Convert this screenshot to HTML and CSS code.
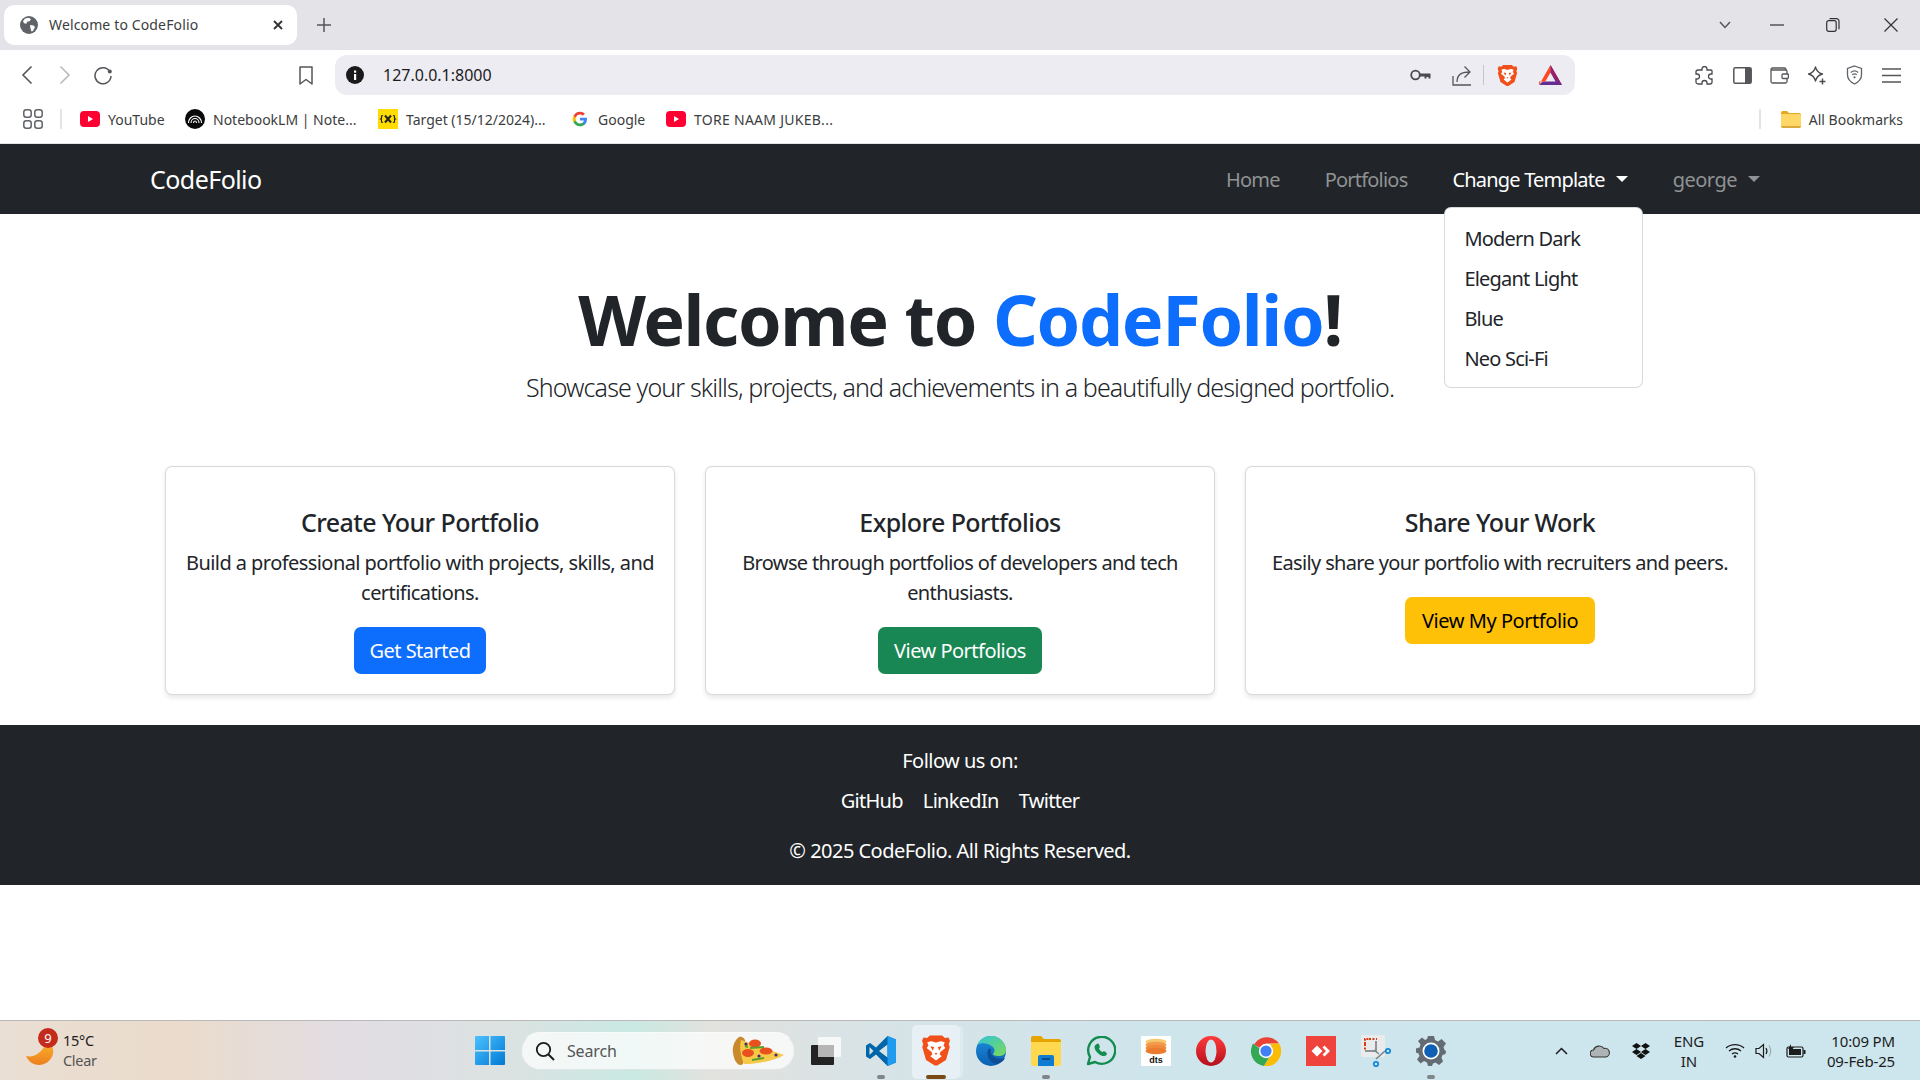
FILE: index.html
```html
<!DOCTYPE html>
<html lang="en">
<head>
<meta charset="utf-8">
<title>Welcome to CodeFolio</title>
<link rel="stylesheet" href="styles.css">
</head>
<body>
<svg class="defs" width="0" height="0" aria-hidden="true">
  <symbol id="brave" viewBox="0 0 24 26">
    <path fill="#f1501a" d="M7 1h10l2 2 3-.5 1.2 2.7-1 2.8.8 2.2-3 10.300L13 25h-2l-7-4.500L1 10.200 1.800 8l-1-2.800L2 2.500 5 3z"/>
    <path fill="#fff" d="M12 6.500c-1.800 0-3-1.200-4.600-.8L5 6.300 6 9l-1.500 2 4 3.200.6 1.800-1.600 1.500L12 21l4.500-3.500-1.600-1.500.6-1.800 4-3.200L18 9l1-2.700-2.400-.6C15 5.300 13.800 6.500 12 6.500z"/>
    <path fill="#f1501a" d="M7.500 9.500l3 .7-1 3zM16.500 9.500l-3 .7 1 3zM10.800 15h2.400L12 16.500z"/>
  </symbol>
  <symbol id="yt" viewBox="0 0 20 16">
    <rect width="20" height="16" rx="4" fill="#ff0033"/>
    <path fill="#fff" d="M8 5l5 3-5 3z"/>
  </symbol>
</svg>
<div class="screen">
  <header class="browser">
    <div class="tabstrip">
      <div class="tab">
        <svg class="tab-globe" width="18" height="18" viewBox="0 0 18 18"><circle cx="9" cy="9" r="9" fill="#5f6368"/><path fill="#fff" d="M5 2.500l4-.8 2 1.500-1.500 2-2.500.5-.5 2-2.500-.5-1-2zM10 9l3.500.5 1.500 1.500-2 4-1.500.5-1-3z"/></svg>
        <span class="tab-title">Welcome to CodeFolio</span>
        <svg class="tab-close" width="10" height="10" viewBox="0 0 10 10"><path d="M1 1l8 8M9 1l-8 8" stroke="#2f3134" stroke-width="1.800" fill="none"/></svg>
      </div>
      <svg class="tab-new" width="14" height="14" viewBox="0 0 14 14"><path d="M7 0v14M0 7h14" stroke="#55565a" stroke-width="1.500" fill="none"/></svg>
      <div class="win-ctrls">
        <svg class="win-chev" width="12" height="8" viewBox="0 0 12 8"><path d="M1 1l5 5.500L11 1" stroke="#55565a" stroke-width="1.500" fill="none"/></svg>
        <svg class="win-min" width="14" height="2" viewBox="0 0 14 2"><path d="M0 1h14" stroke="#333" stroke-width="1.200"/></svg>
        <svg class="win-max" width="14" height="14" viewBox="0 0 14 14"><rect x=".7" y="2.700" width="9.500" height="10.600" rx="2" fill="none" stroke="#333" stroke-width="1.200"/><path d="M3.500.7h7a2.500 2.500 0 0 1 2.500 2.500v8" fill="none" stroke="#333" stroke-width="1.200"/></svg>
        <svg class="win-close" width="14" height="14" viewBox="0 0 14 14"><path d="M.5.5l13 13M13.500.5l-13 13" stroke="#333" stroke-width="1.200" fill="none"/></svg>
      </div>
    </div>
    <div class="toolbar">
      <span class="tb-btn"><svg width="12" height="20" viewBox="0 0 12 20"><path d="M10.500 1.500L2 10l8.500 8.500" stroke="#55565a" stroke-width="1.600" fill="none"/></svg></span>
      <span class="tb-btn"><svg width="12" height="20" viewBox="0 0 12 20"><path d="M1.500 1.500L10 10l-8.500 8.500" stroke="#b9b9be" stroke-width="1.600" fill="none"/></svg></span>
      <span class="tb-btn"><svg width="20" height="20" viewBox="0 0 20 20"><path d="M16.800 6.500A8 8 0 1 0 18 11" stroke="#55565a" stroke-width="1.500" fill="none"/><circle cx="16.800" cy="6.500" r="2" fill="#55565a"/></svg></span>
      <span class="tb-btn tb-bookmark"><svg width="14" height="19" viewBox="0 0 14 19"><path d="M1 1h12v17l-6-4.500L1 18z" stroke="#55565a" stroke-width="1.500" fill="none" stroke-linejoin="round"/></svg></span>
      <div class="address">
        <svg class="addr-info" width="18" height="18" viewBox="0 0 18 18"><circle cx="9" cy="9" r="9" fill="#1a1a1c"/><rect x="8" y="8" width="2.200" height="6" fill="#fff"/><rect x="8" y="4.500" width="2.200" height="2.200" fill="#fff"/></svg>
        <span class="addr-url">127.0.0.1:8000</span>
        <div class="addr-icons">
          <span class="ai ai-key"><svg width="21" height="12" viewBox="0 0 21 12"><circle cx="5.500" cy="6" r="4.300" fill="none" stroke="#4a4b4f" stroke-width="1.800"/><path d="M10 4.500h10.500V9.500h-2V8h-2v1.500h-2V7.500H10z" fill="#4a4b4f"/></svg></span>
          <span class="ai ai-share"><svg width="20" height="21" viewBox="0 0 20 21"><path d="M1 11v9h18" stroke="#55565a" stroke-width="1.300" fill="none"/><path d="M5 17c0-7 4-10 12-10M12.500 1.500l5.500 5.500-5.500 5.500" stroke="#55565a" stroke-width="1.300" fill="none"/></svg></span>
          <span class="ai-div"></span>
          <span class="ai ai-brave"><svg width="21" height="23"><use href="#brave"/></svg></span>
          <span class="ai ai-bat"><svg width="23" height="20" viewBox="0 0 23 20"><path fill="#662d91" d="M11.500 0L23 20H0l3.500-3.500h13L11.500 7.500z"/><path fill="#ff4724" d="M11.500 0v7.500l-5.200 9H0v3.500z"/><path fill="#9e1f63" d="M11.500 0L23 20l-4-3.500-7.500-9z"/></svg></span>
        </div>
      </div>
      <div class="ext-icons">
        <span class="ext"><svg width="19" height="19" viewBox="0 0 19 19"><path d="M7 3a2.500 2.500 0 0 1 5 0v1h4a1 1 0 0 1 1 1v3h-1a2.500 2.500 0 0 0 0 5h1v3a2 2 0 0 1-2 2h-3v-1a2.500 2.500 0 0 0-5 0v1H3a2 2 0 0 1-2-2v-3h1a2.500 2.500 0 0 0 0-5H1V6a2 2 0 0 1 2-2h4z" fill="none" stroke="#4a4b4f" stroke-width="1.300"/></svg></span>
        <span class="ext"><svg width="19" height="17" viewBox="0 0 19 17"><rect x=".8" y=".8" width="17.400" height="15.400" rx="1.500" fill="none" stroke="#55565a" stroke-width="1.500"/><rect x="12" y="1" width="6" height="15" fill="#55565a"/></svg></span>
        <span class="ext"><svg width="19" height="17" viewBox="0 0 19 17"><path d="M16 3V2.500A1.500 1.500 0 0 0 14.500 1h-12A1.500 1.500 0 0 0 1 2.500v12A1.500 1.500 0 0 0 2.500 16h13a1.500 1.500 0 0 0 1.500-1.500v-10A1.500 1.500 0 0 0 15.500 3H1" fill="none" stroke="#55565a" stroke-width="1.300"/><rect x="12" y="7" width="6.400" height="4.500" rx="1" fill="#fff" stroke="#55565a" stroke-width="1.300"/></svg></span>
        <span class="ext"><svg width="19" height="19" viewBox="0 0 19 19"><path d="M8.500 1c1 4 3 6 7 7-4 1-6 3-7 7-1-4-3-6-7-7 4-1 6-3 7-7z" fill="none" stroke="#4a4b4f" stroke-width="1.300" stroke-linejoin="round"/><path d="M15.500 12.500v6M12.500 15.500h6" stroke="#4a4b4f" stroke-width="1.400"/></svg></span>
        <span class="ext"><svg width="17" height="20" viewBox="0 0 17 20"><path d="M8.500 1l7 2.500V10c0 4-3 7-7 9-4-2-7-5-7-9V3.500z" fill="none" stroke="#5f6368" stroke-width="1.300"/><path d="M4.800 7.500c2.200-1.800 5.200-1.800 7.400 0M6.200 9.800c1.400-1 3.200-1 4.600 0" fill="none" stroke="#5f6368" stroke-width="1.200"/><circle cx="8.500" cy="12.300" r="1.100" fill="#5f6368"/></svg></span>
        <span class="ext"><svg width="19" height="15" viewBox="0 0 19 15"><path d="M0 1h19M0 7.500h19M0 14h19" stroke="#55565a" stroke-width="1.400"/></svg></span>
      </div>
    </div>
    <div class="bookmarks">
      <svg class="bm-apps" width="20" height="20" viewBox="0 0 20 20"><g fill="none" stroke="#5f6368" stroke-width="1.500"><rect x=".8" y=".8" width="7.400" height="7.400" rx="2.500"/><rect x="11.800" y=".8" width="7.400" height="7.400" rx="2.500"/><rect x=".8" y="11.800" width="7.400" height="7.400" rx="2.500"/><rect x="11.800" y="11.800" width="7.400" height="7.400" rx="2.500"/></g></svg>
      <span class="bm-divider"></span>
      <a class="bm bm-w1"><svg width="20" height="16"><use href="#yt"/></svg>YouTube</a>
      <a class="bm bm-w2"><svg width="20" height="20" viewBox="0 0 20 20"><circle cx="10" cy="10" r="10" fill="#0a0a0a"/><path d="M3.500 14c0-4 3-7 6.500-7s6.500 3 6.500 7M6 14c0-2.500 1.800-4.500 4-4.500s4 2 4 4.500M8.500 14c0-1 .7-2 1.500-2s1.500 1 1.500 2" stroke="#fff" stroke-width="1.100" fill="none"/></svg>NotebookLM | Note...</a>
      <a class="bm bm-w3"><svg width="20" height="20" viewBox="0 0 20 20"><rect width="20" height="20" fill="#ffdd00"/><path d="M5 6.500L3.500 7v2.500L2.500 10l1 .5V13l1.500.5M15 6.500l1.500.5v2.500l1 .5-1 .5V13l-1.500.5" stroke="#222" stroke-width="1.100" fill="none"/><path d="M7 6.500l6 7M13 6.500l-6 7" stroke="#222" stroke-width="2"/></svg>Target (15/12/2024)...</a>
      <a class="bm bm-w4"><svg width="16" height="16" viewBox="0 0 48 48"><path fill="#4285f4" d="M45 24.500c0-1.600-.1-3.100-.4-4.500H24v8.500h11.800c-.5 2.800-2.100 5.100-4.400 6.700v5.500h7.100c4.200-3.800 6.500-9.500 6.500-16.200z"/><path fill="#34a853" d="M24 46c5.900 0 10.900-2 14.500-5.300l-7.100-5.500c-2 1.300-4.500 2.100-7.400 2.100-5.700 0-10.500-3.800-12.200-9H4.500v5.700C8.100 41.100 15.500 46 24 46z"/><path fill="#fbbc05" d="M11.800 28.300c-.4-1.300-.7-2.800-.7-4.300s.3-3 .7-4.300V14H4.500C3 17 2 20.400 2 24s1 7 2.500 10z"/><path fill="#ea4335" d="M24 10.700c3.200 0 6.100 1.100 8.400 3.300l6.300-6.300C34.900 4.200 29.900 2 24 2 15.500 2 8.100 6.900 4.500 14l7.300 5.700c1.700-5.200 6.500-9 12.200-9z"/></svg>Google</a>
      <a class="bm bm-w5"><svg width="20" height="16"><use href="#yt"/></svg>TORE NAAM JUKEB...</a>
      <span class="bm-divider bm-divider-end"></span>
      <a class="bm bm-all"><svg width="20" height="17" viewBox="0 0 20 17"><path fill="#e3a821" d="M0 2a2 2 0 0 1 2-2h4l2 2h10a2 2 0 0 1 2 2v4H0z"/><path fill="#ffd767" d="M0 3h18a2 2 0 0 1 2 2v10a2 2 0 0 1-2 2H2a2 2 0 0 1-2-2z"/><path fill="#d9a93c" d="M0 15h20a2 2 0 0 1-2 2H2a2 2 0 0 1-2-2z"/></svg>All Bookmarks</a>
    </div>
  </header>

  <div class="site">
    <nav class="navbar">
      <a class="brand">CodeFolio</a>
      <ul class="menu">
        <li class="menu-item"><a class="menu-link">Home</a></li>
        <li class="menu-item"><a class="menu-link">Portfolios</a></li>
        <li class="menu-item">
          <a class="menu-link menu-link-active menu-caret">Change Template</a>
          <ul class="dropdown">
            <li class="dropdown-item">Modern Dark</li>
            <li class="dropdown-item">Elegant Light</li>
            <li class="dropdown-item">Blue</li>
            <li class="dropdown-item">Neo Sci-Fi</li>
          </ul>
        </li>
        <li class="menu-item"><a class="menu-link menu-link-user menu-caret">george</a></li>
      </ul>
    </nav>
    <main class="main">
      <section class="hero">
        <h1 class="hero-title">Welcome to <span class="hero-accent">CodeFolio</span>!</h1>
        <p class="hero-lead">Showcase your skills, projects, and achievements in a beautifully designed portfolio.</p>
      </section>
      <section class="cards">
        <article class="card">
          <h5 class="card-title">Create Your Portfolio</h5>
          <p class="card-text">Build a professional portfolio with projects, skills, and certifications.</p>
          <a class="btn btn-primary">Get Started</a>
        </article>
        <article class="card">
          <h5 class="card-title">Explore Portfolios</h5>
          <p class="card-text card-text-tight">Browse through portfolios of developers and tech enthusiasts.</p>
          <a class="btn btn-success">View Portfolios</a>
        </article>
        <article class="card">
          <h5 class="card-title">Share Your Work</h5>
          <p class="card-text card-text-tight">Easily share your portfolio with recruiters and peers.</p>
          <a class="btn btn-warning">View My Portfolio</a>
        </article>
      </section>
    </main>
    <footer class="site-footer">
      <p class="follow">Follow us on:</p>
      <div class="social"><a>GitHub</a><a>LinkedIn</a><a>Twitter</a></div>
      <p class="copyright">© 2025 CodeFolio. All Rights Reserved.</p>
    </footer>
  </div>

  <footer class="taskbar">
    <div class="weather">
      <div class="weather-icon">
        <svg width="28" height="28" viewBox="0 0 28 28"><defs><linearGradient id="moon" x1="0" y1="0" x2="0" y2="1"><stop offset="0" stop-color="#f8b62a"/><stop offset="1" stop-color="#ee7f1e"/></linearGradient></defs><path fill="url(#moon)" d="M0 19c7 2 16-2 21-15 5 2 7 8 6 13-2 7-8 11-14 11-6 0-11-4-13-9z"/></svg>
        <span class="weather-badge">9</span>
      </div>
      <div class="weather-text"><span class="temp">15°C</span><span class="cond">Clear</span></div>
    </div>
    <div class="task-center">
      <svg class="start" width="30" height="29" viewBox="0 0 30 29"><defs><linearGradient id="win" x1="0" y1="0" x2="1" y2="1"><stop offset="0" stop-color="#4cc2ff"/><stop offset="1" stop-color="#0078d4"/></linearGradient></defs><path fill="url(#win)" d="M0 1a1 1 0 0 1 1-1h13v14H0zM15.500 0H29a1 1 0 0 1 1 1v13H15.500zM0 15.500h14V29H1a1 1 0 0 1-1-1zM15.500 15.500H30V28a1 1 0 0 1-1 1H15.500z"/></svg>
      <div class="search">
        <svg class="search-icon" width="20" height="20" viewBox="0 0 20 20"><circle cx="8.500" cy="8.500" r="6.700" fill="none" stroke="#1c1c1c" stroke-width="1.800"/><path d="M13.500 13.500L19 19" stroke="#1c1c1c" stroke-width="2"/></svg>
        <span class="search-text">Search</span>
        <svg class="pizza" width="52" height="30" viewBox="0 0 52 30"><path fill="#c98a2b" d="M7 1c-4 3-7 9-6 16 1 6 3 11 7 12 3 0 4-2 3-5-1-6 0-13 2-18 1-3-3-6-6-5z"/><path fill="#f7c948" d="M9 4l43 15c-8 5-25 9-40 9-3-7-5-16-3-24z"/><ellipse cx="23" cy="7.500" rx="6" ry="4" fill="#e8501e"/><ellipse cx="16" cy="17" rx="6" ry="4" fill="#e8501e"/><ellipse cx="34" cy="15" rx="6.500" ry="3.500" fill="#e8501e"/><path d="M18 12l14-1M20 24l12-2M13 10l3 1" stroke="#5aa02c" stroke-width="2"/><circle cx="14" cy="8" r="1.600" fill="#4b2a72"/><circle cx="27" cy="20" r="1.600" fill="#4b2a72"/><circle cx="44" cy="19" r="1.600" fill="#4b2a72"/></svg>
      </div>
      <div class="task-apps">
        <span class="app"><svg width="30" height="28" viewBox="0 0 30 28"><rect y="8" width="23" height="20" rx="1" fill="#232323"/><rect x="7" width="23" height="20" rx="1" fill="#fff" fill-opacity=".75"/><rect x="7" y="8" width="16" height="12" fill="#b5b5b5"/></svg></span>
        <span class="app app-running"><svg width="30" height="30" viewBox="0 0 30 30"><path fill="#0065a9" d="M21.500 0L10 11.500 4 7 0 9.500v11L4 23l6-4.500L21.500 30l8.500-3.500v-23zM21.500 8.500v13L13 15zM3.500 11l4 4-4 4z"/><path fill="#1f9cf0" d="M21.500 0L30 3.500v23L21.500 30z"/></svg></span>
        <span class="app app-active"><svg width="30" height="33"><use href="#brave"/></svg></span>
        <span class="app"><svg width="30" height="30" viewBox="0 0 30 30"><defs><linearGradient id="edgeA" x1="0" y1="0" x2="1" y2="1"><stop offset="0" stop-color="#2fc6d8"/><stop offset="1" stop-color="#7ed957"/></linearGradient><linearGradient id="edgeB" x1="0" y1="0" x2="0" y2="1"><stop offset="0" stop-color="#1f8fe0"/><stop offset="1" stop-color="#0b5fb0"/></linearGradient></defs><circle cx="15" cy="15" r="15" fill="url(#edgeB)"/><path fill="url(#edgeA)" d="M1 9C4 3 9 0 15 0c9 0 15 7 15 14 0 5-4 6-8 6-3 0-5-1-5-2 2-2 2-5 0-7-4-4-12-5-16-2z"/><path fill="#0c4f96" d="M12 14c-2 5 1 12 8 14 6-1 8-4 9-6-3 1-8 1-11-1-3-2-4-5-3-7 0-1-2-2-3 0z"/></svg></span>
        <span class="app app-running"><svg width="30" height="30" viewBox="0 0 30 30"><path fill="#e6a400" d="M0 2a2 2 0 0 1 2-2h8l3 3h15a2 2 0 0 1 2 2v5H0z"/><path fill="#ffd84f" d="M0 6h30v22a2 2 0 0 1-2 2H2a2 2 0 0 1-2-2z"/><path fill="#0f7cd4" d="M7 21a2 2 0 0 1 2-2h12a2 2 0 0 1 2 2v9H7z"/><path d="M11 23h8" stroke="#053e73" stroke-width="1.500"/></svg></span>
        <span class="app"><svg width="30" height="30" viewBox="0 0 30 30"><path d="M2 28l2-7A13.500 13.500 0 1 1 9 26z" fill="none" stroke="#128c4f" stroke-width="2.400" stroke-linejoin="round"/><path fill="#128c4f" d="M11 8c1-1 2 0 2.500 1.500s.5 2-.5 3c.5 1.500 2 3 3.500 3.500 1-1 1.800-1 3 0s2 2 1 3c-1.500 1.500-4 1.500-7-.5s-5-5-5-7.500c0-1 1-2.500 2.500-3z"/></svg></span>
        <span class="app"><svg width="30" height="30" viewBox="0 0 30 30"><rect width="30" height="30" rx="1" fill="#fff"/><ellipse cx="15" cy="6" rx="10.500" ry="3.200" fill="#f7c76b"/><ellipse cx="15" cy="9" rx="10.500" ry="3.200" fill="#f29b4c"/><ellipse cx="15" cy="12" rx="10.500" ry="3.200" fill="#f08a3c"/><ellipse cx="15" cy="15" rx="10.500" ry="3.200" fill="#ec7a2e"/><text x="15" y="27" text-anchor="middle" class="dts">dts</text></svg></span>
        <span class="app"><svg width="30" height="30" viewBox="0 0 30 30"><defs><linearGradient id="opera" x1="0" y1="0" x2="0" y2="1"><stop offset="0" stop-color="#ff3b3b"/><stop offset="1" stop-color="#b50f1d"/></linearGradient></defs><circle cx="15" cy="15" r="15" fill="url(#opera)"/><ellipse cx="15" cy="15" rx="5.500" ry="11.500" fill="#cfe4ec"/></svg></span>
        <span class="app"><svg width="30" height="30" viewBox="0 0 30 30"><path fill="#ea4335" d="M15 15L3 8.500A15 15 0 0 1 28 7.500H15z"/><path fill="#34a853" d="M2 7.500A15 15 0 0 0 13 30l6-10z"/><path fill="#fbbc05" d="M28 7.500A15 15 0 0 1 13 30l7-11 0-11.500z"/><circle cx="15" cy="15" r="7.200" fill="#fff"/><circle cx="15" cy="15" r="5.600" fill="#3f80f4"/></svg></span>
        <span class="app"><svg width="30" height="30" viewBox="0 0 30 30"><rect width="30" height="30" fill="#ef443b"/><path fill="#fff" d="M11 9.500l5.500 5.500-5.500 5.500L5.500 15zM18.500 9.500L24 15l-5.500 5.500-2-2L20 15l-3.500-3.500z"/></svg></span>
        <span class="app"><svg width="30" height="32" viewBox="0 0 30 32"><rect width="24" height="22" rx="2" fill="#e9ebec"/><path d="M4 9V4h5" stroke="#d83b14" stroke-width="2" stroke-dasharray="2 1.200" fill="none"/><path d="M8 4h8M4 9v7" stroke="#d83b14" stroke-width="2" stroke-dasharray="2 1.500" fill="none"/><path d="M4 16h11V6" stroke="#8e9498" stroke-width="2" fill="none"/><path d="M13 15l5 4M24 16l-9 8" stroke="#7c8286" stroke-width="1.600"/><circle cx="27" cy="16" r="2.200" fill="none" stroke="#1487d8" stroke-width="1.800"/><circle cx="15" cy="29" r="2.200" fill="none" stroke="#1487d8" stroke-width="1.800"/></svg></span>
        <span class="app app-running"><svg width="30" height="30" viewBox="0 0 30 30"><path fill="#636b73" d="M12 0h6l1 4 3 1.400L25.600 3 30 7.400 27.500 11l1 3L30 15v0l-.5 3-3 1-1 2.500L27 25.600 23 29l-3.500-2.500-2.500 1L16 30h-4l-1-3.500L8 25l-3.400 2.500L1 23.500 3.500 20l-1-2.500L0 16.500v-4l3.500-1 1-3L2 5l4-3.500L9 4l2-1z"/><circle cx="15" cy="15" r="8.500" fill="#fff"/><circle cx="15" cy="15" r="6.800" fill="#0f5fb5"/></svg></span>
      </div>
    </div>
    <div class="tray">
      <svg class="tray-chev" width="13" height="8" viewBox="0 0 13 8"><path d="M1 7l5.500-5.500L12 7" stroke="#1c1c1c" stroke-width="1.500" fill="none"/></svg>
      <svg class="tray-cloud" width="20" height="14" viewBox="0 0 20 14"><path d="M4 13a3.500 3.500 0 0 1-.5-7A6 6 0 0 1 14 4.500a4.300 4.300 0 0 1 2 8.500z" fill="#aeb3b6" stroke="#333" stroke-width="1.100"/></svg>
      <svg class="tray-drop" width="18" height="16" viewBox="0 0 18 16"><path fill="#111" d="M4.500 0L9 3 4.500 6 0 3zM13.500 0L18 3l-4.500 3L9 3zM4.500 6L9 9l-4.500 3L0 9zM13.500 6L18 9l-4.500 3L9 9zM9 10l4.500 3L9 16l-4.500-3z"/></svg>
      <div class="tray-lang"><span>ENG</span><span>IN</span></div>
      <svg class="tray-wifi" width="20" height="15" viewBox="0 0 20 15"><path d="M1 5c5-4.500 13-4.500 18 0M4 8c3.500-3 8.500-3 12 0M7 11c2-1.500 4-1.500 6 0" fill="none" stroke="#1c1c1c" stroke-width="1.300"/><circle cx="10" cy="13.500" r="1.300" fill="#1c1c1c"/></svg>
      <svg class="tray-vol" width="18" height="16" viewBox="0 0 18 16"><path d="M1 5.500h3L8.500 1.500v13L4 10.500H1z" fill="none" stroke="#1c1c1c" stroke-width="1.200"/><path d="M11 5c1.200 2 1.200 4 0 6" stroke="#1c1c1c" stroke-width="1.200" fill="none"/><path d="M14 2.500c2.200 3.500 2.200 7.500 0 11" stroke="#9aa" stroke-width="1.100" fill="none"/></svg>
      <svg class="tray-bat" width="20" height="14" viewBox="0 0 20 14"><rect x="1" y="3" width="16" height="10" rx="1.500" fill="none" stroke="#1c1c1c" stroke-width="1.200"/><rect x="3" y="5" width="12" height="6" fill="#1c1c1c"/><rect x="17.500" y="6" width="2" height="4" fill="#1c1c1c"/><path d="M5 0L2 5h3l-1 4 4-6H5z" fill="#1c1c1c"/></svg>
      <div class="tray-clock"><span>10:09 PM</span><span>09-Feb-25</span></div>
    </div>
  </footer>
</div>
</body>
</html>
```

FILE: styles.css
```css
* { box-sizing: border-box; }
html, body { margin: 0; padding: 0; height: 100%; }
body {
  font-family: "Noto Sans", "Open Sans", sans-serif;
  color: #212529;
  background: #fff;
  overflow: hidden;
}
a { color: inherit; text-decoration: none; }
ul { list-style: none; margin: 0; padding: 0; }
svg { display: block; flex: none; }
.defs { position: absolute; }
.screen { height: 100vh; display: flex; flex-direction: column; }

/* browser chrome */
.browser { flex: none; background: #fff; }
.tabstrip { height: 50px; background: #e3e3e8; display: flex; align-items: center; padding-left: 4px; }
.tab {
  width: 293px; height: 40px; background: #fff; border-radius: 10px;
  display: flex; align-items: center; padding: 0 14px 0 16px;
}
.tab-title { margin: 0 0 2px 11px; font-size: 14px; letter-spacing: 0.01em; color: #3c3d40; }
.tab-close { margin-left: auto; }
.tab-new { margin-left: 20px; }
.win-ctrls { margin-left: auto; display: flex; align-items: center; padding-right: 22px; }
.win-min { margin-left: 39px; }
.win-max { margin-left: 42px; }
.win-close { margin-left: 44px; }

.toolbar { height: 50px; display: flex; align-items: center; padding-left: 8px; }
.tb-btn { width: 38px; height: 38px; display: flex; align-items: center; justify-content: center; }
.tb-bookmark { margin-left: 165px; margin-right: 10px; }
.address {
  width: 1240px; height: 40px; background: #edecf2; border-radius: 12px;
  display: flex; align-items: center; padding: 0 5px 0 11px;
}
.addr-url { margin-left: 19px; font-size: 16px; color: #1c1c1e; }
.addr-icons { margin-left: auto; display: flex; align-items: center; }
.ai { display: flex; align-items: center; justify-content: center; }
.ai-key, .ai-share { width: 42px; }
.ai-div { width: 1px; height: 20px; background: #c5c5ca; }
.ai-brave { width: 46px; }
.ai-bat { width: 40px; }
.ext-icons { display: flex; margin-left: 111px; }
.ext { width: 37.4px; display: flex; align-items: center; justify-content: center; }

.bookmarks {
  height: 44px; border-bottom: 1px solid #e3e3e6; display: flex; align-items: center;
  padding: 0 17px 5px 23px; font-size: 14px; color: #3c3d40;
}
.bm-divider { width: 2px; height: 20px; background: #e3e3e8; margin-left: 17px; margin-right: 18px; }
.bm-divider-end { margin-left: auto; margin-right: 20px; }
.bm { display: flex; align-items: center; gap: 8px; white-space: nowrap; }
.bm-w1 { width: 105px; }
.bm-w2 { width: 193px; }
.bm-w3 { width: 194px; }
.bm-w4 { width: 94px; gap: 10px; }
.bm-w5 { width: 180px; letter-spacing: 0.02em; }

/* site */
.site { flex: 1; min-height: 0; display: flex; flex-direction: column; }
.navbar {
  height: 70px; background: #212529; display: flex; align-items: center;
  padding: 0 150px; flex: none;
}
.brand { color: #fff; font-size: 25px; letter-spacing: -0.022em; }
.menu { margin-left: auto; display: flex; align-items: center; gap: 25px; }
.menu-item { position: relative; padding: 0 10px; }
.menu-link { display: flex; align-items: center; font-size: 20px; letter-spacing: -0.04em; color: #909294; }
.menu-link-active { color: #fff; }
.menu-link-user { letter-spacing: -0.025em; }
.menu-caret::after {
  content: ""; margin-left: 11px; border-top: 6px solid currentColor;
  border-left: 6px solid transparent; border-right: 6px solid transparent;
}
.dropdown {
  position: absolute; top: 41.5px; left: 2px; width: 199px; z-index: 5;
  background: #fff; border: 1px solid rgba(0,0,0,.15); border-radius: 7px;
  padding: 11px 0 8px;
}
.dropdown-item { height: 40px; padding-left: 19px; font-size: 20px; line-height: 40px; letter-spacing: -0.04em; color: #212529; }

.main { flex: none; padding: 63px 150px 30px; }
.hero { text-align: center; }
.hero-title { margin: 0 0 8px; font-size: 70px; line-height: 84px; font-weight: 700; letter-spacing: -0.019em; }
.hero-accent { color: #0d6efd; }
.hero-lead { margin: 0; font-size: 25px; line-height: 37.5px; font-weight: 300; letter-spacing: -0.035em; }
.cards { margin-top: 59px; display: grid; grid-template-columns: repeat(3, 1fr); gap: 30px; padding: 0 15px; }
.card {
  border: 1px solid rgba(0,0,0,.15); border-radius: 7px; background: #fff;
  box-shadow: 0 2.5px 5px rgba(0,0,0,.09);
  padding: 40px 15px 20px; text-align: center;
  display: flex; flex-direction: column; align-items: center;
}
.card-title { margin: 0 0 11px; font-size: 25px; line-height: 30px; font-weight: 500; letter-spacing: -0.023em; }
.card-text { margin: 0 0 19px; font-size: 20px; line-height: 30px; letter-spacing: -0.028em; }
.card-text-tight { letter-spacing: -0.032em; }
.btn { display: block; height: 47.5px; line-height: 47px; padding: 0 16px; border-radius: 7px; font-size: 20px; letter-spacing: -0.026em; color: #fff; }
.btn-primary { background: #0d6efd; padding: 0 15.5px; }
.btn-success { background: #198754; }
.btn-warning { background: #ffc107; color: #000; padding: 0 16.5px; letter-spacing: -0.022em; }

.site-footer { flex: none; background: #212529; color: #fff; height: 160px; padding-top: 21px; text-align: center; font-size: 20px; letter-spacing: -0.026em; }
.follow { margin: 0; line-height: 30px; }
.social { margin-top: 10px; display: flex; justify-content: center; gap: 20px; line-height: 30px; letter-spacing: -0.035em; }
.copyright { margin: 20px 0 0; line-height: 30px; }

/* taskbar */
.taskbar {
  flex: none; height: 60px; border-top: 1px solid #b9b9b9; position: relative;
  background: linear-gradient(90deg, #eadfd4 0, #eadbcb 9%, #e2dde3 18%, #dce2e2 26%, #c9e9e2 33%, #e2e2de 37%, #d8e3e6 45%, #cee5ec 60%, #cde6ee 100%);
  display: flex; align-items: center; font-size: 14px; color: #1c1c1c;
}
.weather { display: flex; align-items: center; margin-left: 26px; width: 449px; }
.weather-icon { position: relative; width: 30px; height: 30px; margin-top: 2px; }
.weather-badge {
  position: absolute; left: 12px; top: -9px; width: 20px; height: 20px; border-radius: 50%;
  background: #c42b1c; color: #fff; font-size: 13px; line-height: 20px; text-align: center;
}
.weather-text { margin: 0 0 2px 7px; display: flex; flex-direction: column; font-size: 14.5px; line-height: 20px; letter-spacing: -0.02em; }
.cond { color: #555; }
.task-center { display: flex; align-items: center; }
.search {
  margin-left: 16px; width: 274px; height: 38px; border-radius: 19px;
  background: rgba(255,255,255,.72); border: 1px solid rgba(0,0,0,.08); border-top-color: rgba(255,255,255,.4);
  display: flex; align-items: center; padding: 0 10px 0 13px;
}
.search-text { margin-left: 12px; font-size: 16px; letter-spacing: -0.01em; color: #555; }
.pizza { margin-left: auto; }
.task-apps { display: flex; align-items: center; gap: 25px; margin-left: 16px; }
.app { position: relative; width: 30px; height: 40px; display: flex; align-items: center; justify-content: center; }
.app-running::after {
  content: ""; position: absolute; bottom: -8px; left: 11px; width: 8px; height: 4px;
  border-radius: 2px; background: #7f8589;
}
.app-active::before {
  content: ""; position: absolute; left: -9px; right: -9px; top: -6px; bottom: -8px;
  border-radius: 5px; background: #e6f0f5; box-shadow: 4px 0 0 -1px #dcebf1; z-index: 0;
}
.app-active svg { position: relative; }
.app-active::after {
  content: ""; position: absolute; bottom: -8px; left: 5px; width: 20px; height: 4px;
  border-radius: 2px; background: #7a4a16;
}
.dts { font-family: "Liberation Sans", sans-serif; font-weight: 700; font-size: 9px; fill: #111; }
.tray { margin-left: auto; display: flex; align-items: center; padding-right: 25px; font-size: 15px; }
.tray-cloud { margin-left: 22px; }
.tray-drop { margin-left: 22px; }
.tray-lang { margin-left: 19px; width: 40px; display: flex; flex-direction: column; align-items: center; line-height: 20px; letter-spacing: -0.01em; }
.tray-wifi { margin-left: 16px; }
.tray-vol { margin-left: 10px; }
.tray-bat { margin-left: 13px; }
.tray-clock { margin-left: 21px; display: flex; flex-direction: column; align-items: flex-end; line-height: 20px; letter-spacing: -0.01em; }
```
